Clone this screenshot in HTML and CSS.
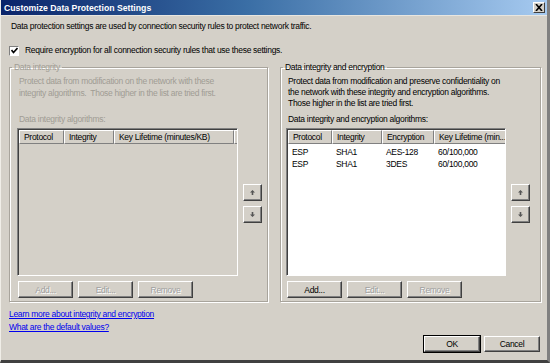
FILE: index.html
```html
<!DOCTYPE html>
<html lang="en">
<head>
    <meta charset="UTF-8">
    <title>Customize Data Protection Settings</title>
    <link rel="stylesheet" href="styles.css">
</head>
<body>
    <div class="window">
        <div class="titlebar">
            <span class="title">Customize Data Protection Settings</span>
            <span class="close">
                <svg width="8" height="7" viewBox="0 0 8 7"><path d="M1 0 L7 7 M7 0 L1 7" stroke="#000" stroke-width="1.6"/></svg>
            </span>
        </div>

        <div class="content">
            <p class="intro">Data protection settings are used by connection security rules to protect network traffic.</p>

            <label class="check">
                <span class="box">
                    <svg width="7" height="7" viewBox="0 0 7 7"><path d="M0.5 3 L2.5 5.5 L6.5 1" fill="none" stroke="#000" stroke-width="1.6"/></svg>
                </span>
                Require encryption for all connection security rules that use these settings.
            </label>

            <div class="groups">
                <!-- Левая группа: только целостность (отключена) -->
                <fieldset class="group group-left disabled">
                    <legend>Data integrity</legend>
                    <div class="group-inner">
                        <div class="group-main">
                            <p class="desc">Protect data from modification on the network with these<br>integrity algorithms.&nbsp; Those higher in the list are tried first.</p>
                            <div class="list-label">Data integrity algorithms:</div>
                            <div class="list list-gray">
                                <div class="list-head">
                                    <span class="col" style="width:45px">Protocol</span>
                                    <span class="col" style="width:50px">Integrity</span>
                                    <span class="col" style="width:120px">Key Lifetime (minutes/KB)</span>
                                    <span class="col col-rest"></span>
                                </div>
                            </div>
                            <div class="btn-row">
                                <button class="btn" disabled>Add...</button>
                                <button class="btn" disabled>Edit...</button>
                                <button class="btn" disabled>Remove</button>
                            </div>
                        </div>
                        <div class="arrows">
                            <button class="arrow"><svg width="5" height="5" viewBox="0 0 5 5"><path d="M2.5 0 L5 2.5 H3.3 V5 H1.7 V2.5 H0 Z" fill="#555"/></svg></button>
                            <button class="arrow"><svg width="5" height="5" viewBox="0 0 5 5"><path d="M2.5 5 L5 2.5 H3.3 V0 H1.7 V2.5 H0 Z" fill="#555"/></svg></button>
                        </div>
                    </div>
                </fieldset>

                <!-- Правая группа: целостность и шифрование -->
                <fieldset class="group group-right">
                    <legend>Data integrity and encryption</legend>
                    <div class="group-inner">
                        <div class="group-main">
                            <p class="desc">Protect data from modification and preserve confidentiality on<br>the network with these integrity and encryption algorithms.<br>Those higher in the list are tried first.</p>
                            <div class="list-label">Data integrity and encryption algorithms:</div>
                            <div class="list list-white">
                                <div class="list-head">
                                    <span class="col" style="width:44px">Protocol</span>
                                    <span class="col" style="width:50px">Integrity</span>
                                    <span class="col" style="width:52px">Encryption</span>
                                    <span class="col" style="width:75px">Key Lifetime (min...</span>
                                    <span class="col col-rest"></span>
                                </div>
                                <div class="list-row">
                                    <span class="cell" style="width:44px">ESP</span>
                                    <span class="cell" style="width:50px">SHA1</span>
                                    <span class="cell" style="width:52px">AES-128</span>
                                    <span class="cell">60/100,000</span>
                                </div>
                                <div class="list-row">
                                    <span class="cell" style="width:44px">ESP</span>
                                    <span class="cell" style="width:50px">SHA1</span>
                                    <span class="cell" style="width:52px">3DES</span>
                                    <span class="cell">60/100,000</span>
                                </div>
                            </div>
                            <div class="btn-row">
                                <button class="btn">Add...</button>
                                <button class="btn" disabled>Edit...</button>
                                <button class="btn" disabled>Remove</button>
                            </div>
                        </div>
                        <div class="arrows">
                            <button class="arrow"><svg width="5" height="5" viewBox="0 0 5 5"><path d="M2.5 0 L5 2.5 H3.3 V5 H1.7 V2.5 H0 Z" fill="#555"/></svg></button>
                            <button class="arrow"><svg width="5" height="5" viewBox="0 0 5 5"><path d="M2.5 5 L5 2.5 H3.3 V0 H1.7 V2.5 H0 Z" fill="#555"/></svg></button>
                        </div>
                    </div>
                </fieldset>
            </div>

            <div class="footer">
                <div class="links">
                    <a href="#">Learn more about integrity and encryption</a>
                    <a href="#">What are the default values?</a>
                </div>
                <div class="dialog-buttons">
                    <button class="btn btn-dialog btn-default">OK</button>
                    <button class="btn btn-dialog">Cancel</button>
                </div>
            </div>
        </div>
    </div>
</body>
</html>
```

FILE: styles.css
```css
body {
    margin: 0;
    font-family: "Liberation Sans", Arial, sans-serif;
    font-size: 8.5px;
    letter-spacing: -0.3px;
    color: #000;
    background: #d4d0c8;
}
.window {
    width: 550px;
    height: 363px;
    box-sizing: border-box;
    background: #d4d0c8;
    border-left: 1px solid #f0eee8;
    border-right: 3px solid #808080;
    border-bottom: 3px solid #404040;
    display: flex;
    flex-direction: column;
}
.titlebar {
    height: 15px;
    background: linear-gradient(to right, #0a246a, #3a6ea5 45%, #a6caf0);
    display: flex;
    align-items: center;
    justify-content: space-between;
    padding: 0 2px 0 3px;
    border-bottom: 1px solid #e8e6e0;
}
.title {
    color: #fff;
    font-weight: bold;
    font-size: 8.7px;
    letter-spacing: 0;
}
.close {
    width: 12px;
    height: 11px;
    box-sizing: border-box;
    background: #d4d0c8;
    border: 1px solid;
    border-color: #fff #404040 #404040 #fff;
    display: flex;
    align-items: center;
    justify-content: center;
}
.content {
    flex: 1;
    display: flex;
    flex-direction: column;
    padding: 0 6px 0 8px;
}
.intro {
    margin: 5px 0 0 2px;
    line-height: 11px;
}
.check {
    display: flex;
    align-items: center;
    gap: 6px;
    margin-top: 13px;
    line-height: 11px;
}
.box {
    width: 10px;
    height: 10px;
    box-sizing: border-box;
    background: #fff;
    border: 1px solid;
    border-color: #808080 #fff #fff #808080;
    display: flex;
    align-items: center;
    justify-content: center;
}
.groups {
    display: flex;
    gap: 12px;
    margin-top: 6px;
}
.group {
    margin: 0;
    padding: 0;
    border: 1px solid #a8a49c;
    box-shadow: inset 1px 1px 0 #fff, 1px 1px 0 #fff;
    height: 240px;
    box-sizing: border-box;
}
.group legend {
    padding: 0 2px;
    margin-left: 2px;
    line-height: 11px;
}
.group-left {
    width: 259px;
}
.group-right {
    width: 261px;
}
.group-inner {
    display: flex;
    padding: 0 0 0 7px;
}
.group-right .group-inner {
    padding-left: 5px;
}
.group-main {
    display: flex;
    flex-direction: column;
    width: 221px;
}
.group-right .group-main {
    width: 220px;
}
.desc {
    margin: 3px 0 0 2px;
    height: 38px;
    line-height: 11px;
    white-space: nowrap;
}
.group-left .desc {
    margin-top: 2px;
    height: 39px;
    line-height: 12px;
}
.list-label {
    margin: 0 0 3px 2px;
    line-height: 11px;
}
.list {
    width: 221px;
    height: 148px;
    box-sizing: border-box;
    border: 1px solid;
    border-color: #808080 #fff #fff #808080;
    box-shadow: inset 1px 1px 0 #404040;
    padding: 1px 0 0 1px;
    overflow: hidden;
}
.group-right .list {
    width: 220px;
}
.list-gray {
    background: #d4d0c8;
}
.list-white {
    background: #fff;
}
.list-head {
    display: flex;
    height: 14px;
    margin-bottom: 2px;
}
.col {
    box-sizing: border-box;
    height: 14px;
    line-height: 12px;
    padding-left: 4px;
    background: #d4d0c8;
    border: 1px solid;
    border-color: #fff #808080 #808080 #fff;
    white-space: nowrap;
    overflow: hidden;
    flex-shrink: 0;
}
.col-rest {
    flex: 1;
}
.list-row {
    display: flex;
    height: 12px;
    line-height: 12px;
}
.cell {
    padding-left: 4px;
    box-sizing: border-box;
    flex-shrink: 0;
    white-space: nowrap;
}
.btn-row {
    display: flex;
    gap: 5px;
    margin-top: 5px;
    padding-left: 1px;
}
.btn {
    font-family: inherit;
    font-size: 8.5px;
    letter-spacing: -0.3px;
    width: 55px;
    height: 17px;
    padding: 0;
    background: #d4d0c8;
    color: #000;
    border: 1px solid;
    border-color: #fff #404040 #404040 #fff;
    box-shadow: inset -1px -1px 0 #808080;
}
.btn:disabled {
    color: #a0a0a0;
    text-shadow: 1px 1px 0 #fff;
}
.arrows {
    display: flex;
    flex-direction: column;
    gap: 5px;
    margin: 111px 0 0 5px;
}
.group-right .arrows {
    margin-left: 5px;
}
.arrow {
    width: 19px;
    height: 17px;
    padding: 0;
    background: #d4d0c8;
    border: 1px solid;
    border-color: #fff #404040 #404040 #fff;
    box-shadow: inset -1px -1px 0 #808080;
    display: flex;
    align-items: center;
    justify-content: center;
}
.disabled {
    color: #a09c94;
}
.disabled .col {
    color: #000;
}
.footer {
    display: flex;
    justify-content: space-between;
    margin-top: 7px;
}
.links {
    display: flex;
    flex-direction: column;
    gap: 2px;
}
.links a {
    color: #0000ee;
    line-height: 11px;
}
.dialog-buttons {
    display: flex;
    gap: 4px;
    align-items: flex-end;
    margin: 27px 1px 0 0;
}
.btn-dialog {
    width: 56px;
    height: 16px;
}
.btn-default {
    outline: 1px solid #000;
    outline-offset: 0;
}
```
